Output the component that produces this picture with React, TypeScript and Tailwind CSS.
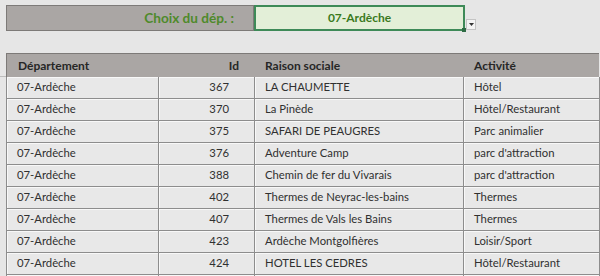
const rows: [string, string, string][] = [
  ['367', 'LA CHAUMETTE', 'Hôtel'],
  ['370', 'La Pinède', 'Hôtel/Restaurant'],
  ['375', 'SAFARI DE PEAUGRES', 'Parc animalier'],
  ['376', 'Adventure Camp', "parc d'attraction"],
  ['388', 'Chemin de fer du Vivarais', "parc d'attraction"],
  ['402', 'Thermes de Neyrac-les-bains', 'Thermes'],
  ['407', 'Thermes de Vals les Bains', 'Thermes'],
  ['423', 'Ardèche Montgolfières', 'Loisir/Sport'],
  ['424', 'HOTEL LES CEDRES', 'Hôtel/Restaurant'],
  ['', '', ''],
];

const cell =
  'h-[22px] flex items-center border-r border-b border-[#8d8d8d] bg-[#e8e8e8] shadow-[inset_1px_1px_0_#f8f8f8] text-[#303030]';

export default function App() {
  return (
    <div
      className="w-[600px] h-[276px] overflow-hidden bg-[#e6e6e6] pt-[5px] text-[12px]"
      style={{ fontFamily: 'Lato, "Liberation Sans", sans-serif' }}
    >
      {/* sélection du département */}
      <div className="flex items-start pl-[6px]">
        <div className="w-[248px] h-[26px] flex items-center justify-end pr-[19px] bg-[#aaa6a4] border border-[#7d7a78] text-[13.6px] font-bold text-[#4f8a2b]">
          Choix du dép. :
        </div>
        <div className="relative w-[211px] h-[26px] flex items-center justify-center bg-[#e3efd8] border-2 border-[#3e8a58] text-[12px] font-bold text-[#3a7a1e]">
          07-Ardèche
          <span className="absolute right-[-3px] bottom-[-3px] w-[4px] h-[4px] bg-[#2f6b45]" />
        </div>
        <div className="mt-[14px] ml-[1px] w-[10px] h-[11px] flex items-center justify-center bg-[#f4f4f4] border border-[#c4c4c4]">
          <svg width="5" height="3" viewBox="0 0 5 3">
            <path d="M0 0h5L2.5 3z" fill="#333" />
          </svg>
        </div>
      </div>

      {/* tableau */}
      <div className="flex mt-[22px]">
        <div className="w-[6px] h-[24px] border-b border-[#bdbdbd]" />
        <div className="w-[593px]">
          <div className="grid grid-cols-[152px_96px_209px_136px] h-[24px] bg-[#aaa6a4] border-t border-l border-[#7d7a78] font-bold text-[#262626]">
            <div className="flex items-center pl-[11px]">Département</div>
            <div className="flex items-center justify-end pr-[16px]">Id</div>
            <div className="flex items-center pl-[10px]">Raison sociale</div>
            <div className="flex items-center pl-[10px]">Activité</div>
          </div>
          {rows.map(([id, nom, act], i) => (
            <div key={i} className="grid grid-cols-[152px_96px_209px_136px] border-l border-[#8d8d8d] text-[11.3px]">
              <div className={`${cell} pl-[10px]`}>{id ? '07-Ardèche' : ''}</div>
              <div className={`${cell} justify-end pr-[25px]`}>{id}</div>
              <div className={`${cell} pl-[10px]`}>{nom}</div>
              <div className={`${cell} pl-[10px]`}>{act}</div>
            </div>
          ))}
        </div>
      </div>
    </div>
  );
}
